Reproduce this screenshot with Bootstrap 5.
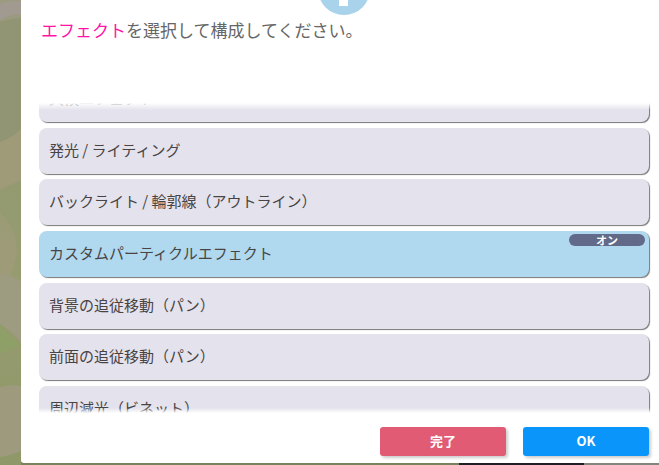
<!DOCTYPE html>
<html lang="ja">
<head>
<meta charset="utf-8">
<meta name="viewport" content="width=device-width, initial-scale=1">
<title>エフェクト</title>
<link href="https://cdn.jsdelivr.net/npm/bootstrap@5.3.0/dist/css/bootstrap.min.css" rel="stylesheet">
<style>
body { font-family: "Noto Sans CJK JP", "Noto Sans", sans-serif; background: #96986f; color: #444; }
.scene { z-index: -1; }
.dialog-pane { margin-left: 21px; margin-bottom: 2px; padding: 0 8px 7px 18px; border-bottom-left-radius: 3px; }
.emblem { left: 50%; top: -37px; margin-left: -22px; }
.prompt { font-size: 17px; line-height: 26px; padding: 17px 0 0 2px; color: #666; }
.prompt span { color: #ff14a5; }
.viewport-list { height: 310px; padding-right: 2px; margin-bottom: 1px; }
.viewport-list::before, .viewport-list::after { content: ""; position: absolute; left: 0; right: 0; height: 7px; z-index: 2; pointer-events: none; }
.viewport-list::before { top: 0; background: linear-gradient(#fff, #fff0); }
.viewport-list::after { bottom: 0; height: 5px; background: linear-gradient(#fff0, #fff); }
.effects { height: 356px; margin-top: -27px; }
.effect { height: 46px; border: 0; border-radius: 8px; padding: 0 10px 2px; font-size: 15px; line-height: 22px; color: #484444; background: #e4e2ec; box-shadow: 1px 1px 1px #777; }
.effect.is-on { background: #b0d8ef; }
.on-tag { top: 3px; right: 4px; width: 76px; height: 12px; border-radius: 6px; background: #616a88; color: #fff; font-size: 11px; line-height: 12px; font-weight: 700; }
.actions { gap: 17px; padding: 13px 2px 0 0; }
.action { width: 126px; height: 29px; border: 0; border-radius: 3px; padding: 0 0 2px; color: #fff; font-size: 13px; line-height: 27px; font-weight: 700; box-shadow: 2px 2px 3px #0003; }
.action:hover { color: #fff; }
.action-done, .action-done:hover { background: #e05b73; }
.action-ok, .action-ok:hover { background: #0995fa; }
</style>
<script src="https://cdn.jsdelivr.net/npm/bootstrap@5.3.0/dist/js/bootstrap.bundle.min.js"></script>
</head>
<body class="min-vh-100 d-flex flex-column overflow-hidden">
<svg class="scene position-fixed top-0 start-0 w-100 h-100" viewBox="0 0 659 465" preserveAspectRatio="none" aria-hidden="true">
  <defs><linearGradient id="field" x2="0" y2="1"><stop stop-color="#9c9a82"/><stop offset=".3" stop-color="#929a70"/><stop offset=".6" stop-color="#979b70"/><stop offset="1" stop-color="#8e9868"/></linearGradient></defs>
  <path fill="url(#field)" d="M0 0h659v465H0z"/>
  <path fill="#a09a90" d="M0 4Q12 0 21 2V14Q10 14 0 20z"/>
  <path fill="#929574" d="M0 22Q12 18 21 18V129Q12 138 0 143z"/>
  <path fill="#9f9b78" d="M0 142Q12 138 21 129V180L0 190z"/>
  <path fill="#a09b7c" opacity=".7" d="M0 212Q16 228 17 250Q15 274 0 292z"/>
  <path fill="#9d9b80" d="M0 274Q12 275 21 281V342Q10 330 0 324z"/>
  <path fill="#8f9f68" d="M0 325Q10 336 21 345L0 354z"/>
  <path fill="#9d9a7d" d="M0 387Q12 384 21 386V451Q10 456 0 457z"/>
  <path fill="#77835a" d="M21 462H459V465H21z"/>
  <path fill="#211e25" d="M459 462H584V465H459z"/>
  <path fill="#85857f" d="M584 462H659V465H584z"/>
</svg>
<main class="dialog-pane position-relative bg-white flex-grow-1 d-flex flex-column">
  <svg class="emblem position-absolute" width="52" height="52" viewBox="0 0 52 52" aria-hidden="true"><circle cx="26" cy="26" r="26" fill="#a8d3eb"/><path d="M21 18h9v25h-9z" fill="#fff"/></svg>
  <h1 class="prompt fw-normal mb-auto"><span>エフェクト</span>を選択して構成してください。</h1>
  <div class="viewport-list position-relative overflow-hidden">
    <div class="effects d-flex flex-column justify-content-between">
      <button type="button" class="effect w-100 text-start flex-shrink-0">天候エフェクト</button>
      <button type="button" class="effect w-100 text-start flex-shrink-0">発光 / ライティング</button>
      <button type="button" class="effect w-100 text-start flex-shrink-0">バックライト / 輪郭線（アウトライン）</button>
      <button type="button" class="effect is-on position-relative w-100 text-start flex-shrink-0" aria-pressed="true">カスタムパーティクルエフェクト<span class="on-tag position-absolute text-center">オン</span></button>
      <button type="button" class="effect w-100 text-start flex-shrink-0">背景の追従移動（パン）</button>
      <button type="button" class="effect w-100 text-start flex-shrink-0">前面の追従移動（パン）</button>
      <button type="button" class="effect w-100 text-start flex-shrink-0">周辺減光（ビネット）</button>
    </div>
  </div>
  <div class="actions d-flex justify-content-end">
    <button type="button" class="action action-done btn">完了</button>
    <button type="button" class="action action-ok btn">OK</button>
  </div>
</main>
</body>
</html>
